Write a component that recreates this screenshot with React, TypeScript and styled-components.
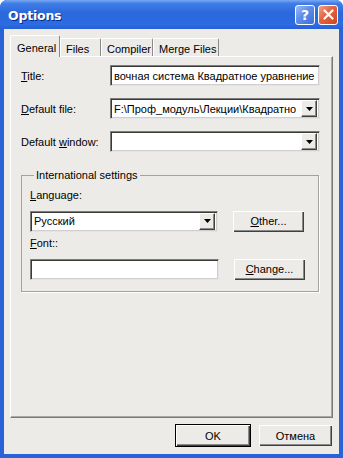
import React from 'react';
import styled, { createGlobalStyle } from 'styled-components';

const GlobalStyle = createGlobalStyle`
    html, body {
        margin: 0;
        padding: 0;
        background: #ffffff;
    }
    * {
        box-sizing: border-box;
    }
`;

const WindowFrame = styled.div`
    width: 343px;
    height: 458px;
    display: flex;
    flex-direction: column;
    background: #2a62d8;
    border-radius: 7px 7px 0 0;
    font-family: "Liberation Sans", Arial, sans-serif;
    font-size: 11px;
    color: #000;
    overflow: hidden;
`;

const TitleBar = styled.div`
    height: 29px;
    flex: none;
    display: flex;
    align-items: center;
    padding: 0 5px 0 8px;
    background: linear-gradient(to bottom, #7aa8f2 0%, #3f7ee8 12%, #2a68dc 45%, #2c6be0 85%, #2560d6 100%);
    border-radius: 7px 7px 0 0;
`;

const Caption = styled.div`
    flex: 1;
    color: #fff;
    font-family: "DejaVu Sans", sans-serif;
    font-weight: bold;
    font-size: 12.5px;
    letter-spacing: -0.2px;
    text-shadow: 1px 1px 0 #0a2c8a;
    padding-top: 1px;
`;

const CaptionButtons = styled.div`
    display: flex;
    gap: 3px;
`;

const CaptionButton = styled.div<{ $close?: boolean }>`
    width: 20px;
    height: 20px;
    border: 1px solid #fff;
    border-radius: 3px;
    display: flex;
    align-items: center;
    justify-content: center;
    color: #fff;
    font-family: "DejaVu Sans", sans-serif;
    font-weight: bold;
    font-size: 14px;
    background: ${p => p.$close
        ? 'linear-gradient(135deg, #f2a08a 0%, #e2623e 45%, #d0461f 100%)'
        : 'linear-gradient(135deg, #9cbcf6 0%, #5d8ceb 45%, #3b6fdc 100%)'};
`;

const Client = styled.div`
    flex: 1;
    margin: 0 4px 4px 4px;
    background: #edebe8;
    display: flex;
    flex-direction: column;
    padding: 6px 6px 0 6px;
`;

const TabStrip = styled.div`
    display: flex;
    align-items: flex-end;
    height: 21px;
    position: relative;
    z-index: 1;
`;

const Tab = styled.div<{ $active?: boolean; $width: number }>`
    width: ${p => p.$width}px;
    height: ${p => (p.$active ? 22 : 18)}px;
    margin-bottom: ${p => (p.$active ? -1 : 0)}px;
    padding: ${p => (p.$active ? '2px 0 0 6px' : '2px 0 0 5px')};
    background: #edebe8;
    border-top: 1px solid #fff;
    border-left: 1px solid #fff;
    border-right: 1px solid #8a8a8a;
    border-radius: 2px 2px 0 0;
    display: flex;
    align-items: center;
    white-space: nowrap;
`;

const Panel = styled.div`
    height: 362px;
    border-top: 1px solid #fff;
    border-left: 1px solid #fff;
    border-right: 1px solid #7a7a7a;
    border-bottom: 1px solid #7a7a7a;
    box-shadow: inset -1px -1px 0 #a8a8a8;
    padding: 8px 12px 0 10px;
    display: flex;
    flex-direction: column;
`;

const FieldRow = styled.div`
    display: flex;
    align-items: center;
    height: 21px;
    margin-bottom: 12px;
`;

const Label = styled.div<{ $width?: number }>`
    width: ${p => (p.$width ? `${p.$width}px` : 'auto')};
    flex: none;
    white-space: nowrap;
`;

const Sunken = styled.div<{ $width?: number }>`
    flex: ${p => (p.$width ? 'none' : '1')};
    width: ${p => (p.$width ? `${p.$width}px` : 'auto')};
    height: 21px;
    background: #fff;
    border: 1px solid;
    border-color: #7c7c7c #e4e4e4 #e4e4e4 #7c7c7c;
    box-shadow: inset 1px 1px 0 #3a3a3a, inset -1px -1px 0 #cfcfcf;
    display: flex;
    align-items: center;
    padding: 0 2px 0 3px;
    white-space: nowrap;
    overflow: hidden;
`;

const ComboText = styled.div`
    flex: 1;
    white-space: nowrap;
`;

const DropButton = styled.div`
    width: 16px;
    height: 17px;
    flex: none;
    background: #edebe8;
    border: 1px solid;
    border-color: #fff #404040 #404040 #fff;
    box-shadow: inset -1px -1px 0 #8a8a8a;
    display: flex;
    align-items: center;
    justify-content: center;
`;

const Group = styled.fieldset`
    margin: 5px 3px 0 0;
    padding: 2px 12px 11px 8px;
    border: 1px solid #a2a2a2;
    box-shadow: 1px 1px 0 #fff;
    display: flex;
    flex-direction: column;
`;

const Legend = styled.legend`
    padding: 0 2px;
    margin-left: 4px;
    line-height: 13px;
`;

const GroupLabel = styled.div`
    line-height: 13px;
    margin: 5px 0 8px 0;
`;

const GroupRow = styled.div`
    display: flex;
    align-items: center;
    gap: 14px;
    height: 22px;
`;

const PushButton = styled.div<{ $default?: boolean; $width: number }>`
    width: ${p => p.$width}px;
    height: 23px;
    flex: none;
    display: flex;
    align-items: center;
    justify-content: center;
    background: #edebe8;
    border: 1px solid ${p => (p.$default ? '#000' : 'transparent')};
    box-shadow: inset 1px 1px 0 #fff, inset -1px -1px 0 #404040, inset -2px -2px 0 #8a8a8a;
`;

const Footer = styled.div`
    display: flex;
    justify-content: flex-end;
    gap: 7px;
    padding: 6px 0 0 0;
`;

const Arrow = () => (
    <svg width="7" height="4" viewBox="0 0 7 4">
        <path d="M0 0 H7 L3.5 4 Z" fill="#000" />
    </svg>
);

const CloseGlyph = () => (
    <svg width="11" height="11" viewBox="0 0 11 11">
        <path d="M1.5 1.5 L9.5 9.5 M9.5 1.5 L1.5 9.5" stroke="#fff" strokeWidth="2.2" strokeLinecap="round" />
    </svg>
);

const App: React.FC = () => {
    return (
        <>
            <GlobalStyle />
            <WindowFrame>
                <TitleBar>
                    <Caption>Options</Caption>
                    <CaptionButtons>
                        <CaptionButton>?</CaptionButton>
                        <CaptionButton $close><CloseGlyph /></CaptionButton>
                    </CaptionButtons>
                </TitleBar>
                <Client>
                    <TabStrip>
                        <Tab $active $width={50}>General</Tab>
                        <Tab $width={41}>Files</Tab>
                        <Tab $width={52}>Compiler</Tab>
                        <Tab $width={66}>Merge Files</Tab>
                    </TabStrip>
                    <Panel>
                        <FieldRow>
                            <Label $width={89}><u>T</u>itle:</Label>
                            <Sunken>вочная система Квадратное уравнение</Sunken>
                        </FieldRow>
                        <FieldRow>
                            <Label $width={89}><u>D</u>efault file:</Label>
                            <Sunken>
                                <ComboText>F:\Проф_модуль\Лекции\Квадратно</ComboText>
                                <DropButton><Arrow /></DropButton>
                            </Sunken>
                        </FieldRow>
                        <FieldRow>
                            <Label $width={89}>Default <u>w</u>indow:</Label>
                            <Sunken>
                                <ComboText />
                                <DropButton><Arrow /></DropButton>
                            </Sunken>
                        </FieldRow>
                        <Group>
                            <Legend>International settings</Legend>
                            <GroupLabel><u>L</u>anguage:</GroupLabel>
                            <GroupRow>
                                <Sunken $width={188}>
                                    <ComboText>Русский</ComboText>
                                    <DropButton><Arrow /></DropButton>
                                </Sunken>
                                <PushButton $width={73}><span><u>O</u>ther...</span></PushButton>
                            </GroupRow>
                            <GroupLabel><u>F</u>ont::</GroupLabel>
                            <GroupRow>
                                <Sunken $width={189} />
                                <PushButton $width={73}><span><u>C</u>hange...</span></PushButton>
                            </GroupRow>
                        </Group>
                    </Panel>
                    <Footer>
                        <PushButton $default $width={76}>OK</PushButton>
                        <PushButton $width={75}>Отмена</PushButton>
                    </Footer>
                </Client>
            </WindowFrame>
        </>
    );
};

export default App;
